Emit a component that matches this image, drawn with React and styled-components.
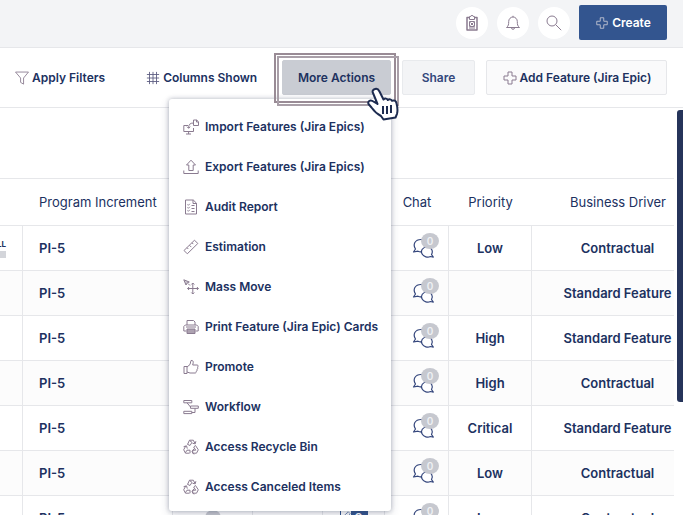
import React from "react";
import styled, { createGlobalStyle } from "styled-components";

const navy = "#20315f";
const mauve = "#8a7b90";
const line = "#e6e7ea";

const GlobalStyle = createGlobalStyle`
  * { box-sizing: border-box; }
  body { margin: 0; background: #fff; }
  body, button { font-family: Inter, "Liberation Sans", sans-serif; color: ${navy}; }
  button { margin: 0; cursor: pointer; }
  svg { flex: none; }
`;

const Page = styled.div`
  height: 100vh;
  overflow: hidden;
  display: flex;
  flex-direction: column;
  background: #fff;
`;

const TopBar = styled.header`
  flex: none;
  height: 48px;
  display: flex;
  align-items: center;
  justify-content: flex-end;
  gap: 9px;
  padding: 0 16px 2px 0;
  background: #f3f4f6;
  border-bottom: 1px solid ${line};
`;

const RoundButton = styled.button`
  width: 32px;
  height: 32px;
  display: grid;
  place-items: center;
  padding: 0;
  border: 0;
  border-radius: 50%;
  background: #fff;
`;

const CreateButton = styled.button`
  width: 88px;
  height: 35px;
  display: flex;
  align-items: center;
  justify-content: center;
  gap: 3px;
  padding: 0;
  border: 0;
  border-radius: 2px;
  background: #33558f;
  color: #fff;
  font-size: 12px;
  font-weight: 600;
  line-height: 16px;
`;

const Toolbar = styled.div`
  flex: none;
  height: 60px;
  display: flex;
  align-items: center;
  padding: 0 16px 0 15px;
  border-bottom: 1px solid ${line};
`;

const PlainButton = styled.button`
  display: flex;
  align-items: center;
  gap: 3px;
  padding: 0;
  border: 0;
  background: none;
  font-size: 12px;
  font-weight: 600;
  line-height: 16px;
  white-space: nowrap;
`;

const FilterGroup = styled.div`
  display: flex;
  gap: 41px;
`;

const ActionGroup = styled.div`
  display: flex;
  gap: 11px;
  margin-left: auto;
`;

const BoxButton = styled.button`
  width: ${(p) => p.$width}px;
  height: 35px;
  display: flex;
  align-items: center;
  justify-content: center;
  gap: 2px;
  padding: 0;
  border: 1px solid ${(p) => p.$edge};
  border-radius: 2px;
  background: ${(p) => p.$fill};
  color: ${(p) => p.$ink || navy};
  font-size: 12px;
  font-weight: 600;
  line-height: 16px;
  white-space: nowrap;
`;

const MenuAnchor = styled.div`
  position: relative;
`;

const FocusFrame = styled.span`
  position: absolute;
  z-index: 3;
  inset: -7px -5px -8px -8px;
  border: 2px solid #998b95;
  pointer-events: none;

  &::after {
    content: "";
    position: absolute;
    inset: 1px -5px -5px 1px;
    border: 2px solid #a99fa8;
  }
`;

const HandCursor = styled.svg`
  position: absolute;
  z-index: 4;
  right: -9px;
  bottom: -26px;
  pointer-events: none;
`;

const Menu = styled.ul`
  position: absolute;
  z-index: 2;
  top: 39px;
  right: 0;
  width: 222px;
  margin: 0;
  padding: 8px 0 4px;
  list-style: none;
  background: #fff;
  border-radius: 3px;
  box-shadow: 0 0 4px rgba(40, 50, 80, 0.3), 0 3px 10px rgba(40, 50, 80, 0.2);
`;

const MenuButton = styled.button`
  width: 100%;
  height: 40px;
  display: flex;
  align-items: center;
  gap: 6px;
  padding: 0 0 0 14px;
  border: 0;
  background: none;
  font-size: 12px;
  font-weight: 600;
  line-height: 16px;
  white-space: nowrap;
`;

const Content = styled.main`
  flex: 1;
  min-height: 0;
  display: flex;
  gap: 3px;
`;

const TableArea = styled.div`
  flex: 1;
  min-width: 0;
  overflow: hidden;
  padding-top: 70px;
`;

const Table = styled.table`
  width: calc(100% + 30px);
  table-layout: fixed;
  border-collapse: separate;
  border-spacing: 0;
  border-top: 1px solid ${line};
`;

const HeadCell = styled.th`
  height: 47px;
  padding: 0 0 0 ${(p) => (p.$left ? 16 : 0)}px;
  border-bottom: 1px solid ${line};
  font-size: 13px;
  font-weight: 400;
  line-height: 16px;
  text-align: ${(p) => (p.$left ? "left" : "center")};
  white-space: nowrap;
`;

const Row = styled.tr`
  background: ${(p) => (p.$shade ? "#fcfcfc" : "#fff")};
`;

const Cell = styled.td`
  height: 45px;
  padding: 0 0 0 ${(p) => (p.$left ? 16 : 0)}px;
  border-right: 1px solid ${line};
  border-bottom: 1px solid ${line};
  font-size: 13px;
  font-weight: 600;
  line-height: 16px;
  text-align: ${(p) => (p.$left ? "left" : "center")};
  white-space: nowrap;
`;

const Col = styled.col`
  width: ${(p) => (p.$width ? p.$width + "px" : "auto")};
`;

const Progress = styled.div`
  display: flex;
  flex-direction: column;
  align-items: flex-end;
  gap: 2px;
  padding-right: 16px;
  font-size: 8px;
  font-weight: 700;
  line-height: 10px;
`;

const ProgressBar = styled.span`
  width: 24px;
  height: 7px;
  background: #d3d5da;
`;

const ChatButton = styled.button`
  position: relative;
  display: block;
  width: 28px;
  height: 26px;
  margin: 0 0 0 25px;
  padding: 0;
  border: 0;
  background: none;
`;

const ChatCount = styled.span`
  position: absolute;
  top: -2px;
  right: -1px;
  width: 18px;
  height: 16px;
  border-radius: 50%;
  background: #c6c8cf;
  color: #eef0f3;
  font-size: 10px;
  font-weight: 600;
  line-height: 16px;
  text-align: center;
`;

const Avatar = styled.span`
  display: block;
  width: 16px;
  height: 16px;
  margin: 0 auto;
  border-radius: 50%;
  background: #c6c8cf;
`;

const Tally = styled.span`
  display: flex;
  width: 28px;
  height: 16px;
  margin: 0 auto;
  border: 1px solid #33558f;
`;

const TallyCount = styled.span`
  width: 18px;
  background: #33558f;
  color: #fff;
  font-size: 12px;
  line-height: 14px;
`;

const ScrollTrack = styled.div`
  flex: none;
  width: 6px;
  padding-top: 2px;
`;

const ScrollThumb = styled.div`
  height: 72%;
  border-radius: 3px 0 0 3px;
  background: #26345a;
`;

const glyphs = {
  clipboard: (
    <>
      <path d="M5 2.500H3v12.500h10V2.500h-2" strokeWidth="1.500" />
      <path d="M5.500 4.500v-3h1.300a1.200 1.200 0 0 1 2.400 0h1.300v3zM5.500 6.500h5v5h-5zM6.500 7.500l3 3M9.500 7.500l-3 3M5 13h6" />
    </>
  ),
  bell: (
    <path d="M1.500 12.500c2-1.500 2.200-3.200 2.200-6A4.300 4.500 0 0 1 8 2a4.300 4.500 0 0 1 4.300 4.500c0 2.800.2 4.500 2.200 6zM6.500 12.800a1.500 1.500 0 0 0 3 0M8 .8V2" />
  ),
  search: <path d="M11 6A5 5 0 1 1 1 6a5 5 0 0 1 10 0zM9.600 9.600l5.600 5.600" />,
  plus: <path d="M6 2h4v4h4v4h-4v4H6v-4H2V6h4z" />,
  filter: <path d="M.6 1.200h14.800L9.800 8v7l-3.400-2V8z" />,
  grid: <path d="M4 1v14M8 1v14M12 1v14M1 4h14M1 8h14M1 12h14" />,
  import: (
    <>
      <path d="M5 6.500H.8v6h9.700V9M3 15h5M5.600 12.500V15" />
      <path d="M10.500 1h3.200L15.500 2.800V6.500h-5zM13.500 1v2h2M10.500 4C7 4 5.600 5.500 5.600 9M4 7.700l1.600 1.600 1.700-1.600" />
    </>
  ),
  export: <path d="M.8 11.500v3h14.400v-3M5.800 11.500V6H3.500L8 1.200 12.500 6h-2.300v5.500z" />,
  audit: (
    <path d="M2.500 1h7.800l3.200 3.200V15h-11zM10 1v3.500h3.500M4.500 5.500l.8.800 1.500-1.500M4.500 8.500l.8.800 1.500-1.500M4.500 11.500l.8.800 1.500-1.500M8.500 6.500h3M8.500 9.500h3M8.500 12.500h3" />
  ),
  ruler: <path d="M1 11.500 11.500 1.200l3.300 3.300L4.300 14.800zM4 8.700l1.300 1.300M6.500 6.300l1.800 1.800M9 3.800l1.300 1.300" />,
  move: (
    <>
      <path d="M.8.800l5.500 2.200-2 .8L3 6z" fill="currentColor" fillOpacity=".4" />
      <path d="M5 4.500l2 2M9.800 4v11M4.600 9.500h10.800M8.300 5.500 9.800 4l1.500 1.500M8.300 13.500 9.800 15l1.500-1.500M6.100 8 4.600 9.500 6.100 11M13.900 8l1.500 1.500-1.500 1.500" />
    </>
  ),
  print: (
    <>
      <path d="M4 6V1.500h6.500L12 3v3M3.500 12H.8V7.500L2.300 6h11.400l1.500 1.500V12h-2.700M3 8h10" />
      <path d="M4 10h8v4.500H4z" fill="currentColor" fillOpacity=".7" />
    </>
  ),
  thumb: (
    <path d="M1 7.500h3v7H1zM4 8l3-2.500 1-4c1.800-.5 2.500 1 2.200 2.300L9.700 6h4.500c1.300 0 1.200 2 .2 2.200.8.600.5 1.800-.5 2 .6.800.2 1.800-.7 2 .3 1-.2 1.800-1.200 1.800H7l-3-1" />
  ),
  flow: (
    <path d="M.8 1.500h8v2.300h-8zM7.500 7h7.800v2.300H7.500zM.8 12.300h8v2.300h-8zM4 3.800 7.500 8M12 9.300v4.200H8.800" />
  ),
  recycle: (
    <path d="M4.500 5.500 6.500 1.200h3.800L12 4.500M9.500 4.300l2.700.5.700-2.600M6.500 1.500 9 3.300 7 6.500 4.500 5.300M12.500 6.500l2.800 4.300-1.800 3.400H9.700v-3h3L10.700 8zM11 9.800 9 12.700l2 2.700M6.500 14.200h-4L.7 10.800l2-3.800M.6 7.700l2.900-.9.800 2.800M2.300 13.800l1.700-2.600h3v3" />
  ),
};

const Icon = ({ name, size = 16, color = mauve }) => (
  <svg
    width={size}
    height={size}
    viewBox="0 0 16 16"
    fill="none"
    stroke="currentColor"
    color={color}
    strokeWidth="1"
    strokeLinejoin="round"
    aria-hidden="true"
  >
    {glyphs[name]}
  </svg>
);

const menuItems = [
  ["import", "Import Features (Jira Epics)"],
  ["export", "Export Features (Jira Epics)"],
  ["audit", "Audit Report"],
  ["ruler", "Estimation"],
  ["move", "Mass Move"],
  ["print", "Print Feature (Jira Epic) Cards"],
  ["thumb", "Promote"],
  ["flow", "Workflow"],
  ["recycle", "Access Recycle Bin"],
  ["recycle", "Access Canceled Items"],
];

const rows = [
  { priority: "Low", driver: "Contractual", progress: true },
  { priority: "", driver: "Standard Feature" },
  { priority: "High", driver: "Standard Feature" },
  { priority: "High", driver: "Contractual" },
  { priority: "Critical", driver: "Standard Feature" },
  { priority: "Low", driver: "Contractual" },
  { priority: "Low", driver: "Contractual", tally: 9 },
];

const Chat = () => (
  <ChatButton aria-label="Chat, 0 messages">
    <svg width="24" height="26" viewBox="0 0 24 26" fill="#fff" stroke="#34467c" strokeWidth="1.2" strokeLinejoin="round" aria-hidden="true">
      <path d="M3.500 14C.5 9.500 3 4.500 9 4.500s8.500 4.500 6.500 8.500-7 4.500-9.500 3.200L1.500 17z" />
      <path d="M19.500 19.500c2-3.500 0-7.500-4.500-7.500s-6.500 3.700-5 6.800 6 4 8.300 2.700l3 .7z" />
    </svg>
    <ChatCount>0</ChatCount>
  </ChatButton>
);

export default function App() {
  return (
    <Page>
      <GlobalStyle />
      <TopBar>
        <RoundButton aria-label="Tasks"><Icon name="clipboard" /></RoundButton>
        <RoundButton aria-label="Notifications"><Icon name="bell" /></RoundButton>
        <RoundButton aria-label="Search"><Icon name="search" /></RoundButton>
        <CreateButton><Icon name="plus" size={14} color="#c3c6d2" />Create</CreateButton>
      </TopBar>
      <Toolbar>
        <FilterGroup>
          <PlainButton><Icon name="filter" size={14} />Apply Filters</PlainButton>
          <PlainButton><Icon name="grid" size={14} color="#5c5c80" />Columns Shown</PlainButton>
        </FilterGroup>
        <ActionGroup>
          <MenuAnchor>
            <BoxButton $width={109} $fill="#c9ccd3" $edge="#c9ccd3" aria-haspopup="menu" aria-expanded="true">
              More Actions
            </BoxButton>
            <FocusFrame />
            <Menu>
              {menuItems.map(([icon, label]) => (
                <li key={label}>
                  <MenuButton><Icon name={icon} />{label}</MenuButton>
                </li>
              ))}
            </Menu>
            <HandCursor width="34" height="34" viewBox="0 0 34 34" fill="#fff" stroke="#1d2b50" strokeWidth="2" strokeLinejoin="round" aria-hidden="true">
              <path d="M9 2c2-.8 3.500.5 4.500 2.500l4 8c1.500-1.500 3.500-1 4.300.5 1.500-1.200 3.500-.7 4.200.8 2-1 4 0 4.500 2.500 1 4 1.500 7 .5 10.500l-1.500 3.700-12 2L15 29c-4-2-7-5-9.500-8.500L2.500 17c-1-2.500 1.500-4.500 4-3l5 3L7 6C6 4 7 2.500 9 2z" />
              <path d="M17 19v8M21 19v8M25 18v8" />
            </HandCursor>
          </MenuAnchor>
          <BoxButton $width={73} $fill="#f3f4f6" $edge="#e8eaed" $ink="#34487c">Share</BoxButton>
          <BoxButton $width={181} $fill="#fafafb" $edge={line}><Icon name="plus" />Add Feature (Jira Epic)</BoxButton>
        </ActionGroup>
      </Toolbar>
      <Content>
        <TableArea>
          <Table>
            <colgroup>
              <Col $width={23} />
              <Col $width={150} />
              <Col $width={80} />
              <Col $width={70} />
              <Col $width={62} />
              <Col $width={64} />
              <Col $width={83} />
              <Col />
            </colgroup>
            <thead>
              <tr>
                <HeadCell />
                <HeadCell $left>Program Increment</HeadCell>
                <HeadCell />
                <HeadCell />
                <HeadCell />
                <HeadCell>Chat</HeadCell>
                <HeadCell>Priority</HeadCell>
                <HeadCell>Business Driver</HeadCell>
              </tr>
            </thead>
            <tbody>
              {rows.map((row, i) => (
                <Row key={i} $shade={i % 2 === 1}>
                  <Cell>{row.progress && <Progress>LL<ProgressBar /></Progress>}</Cell>
                  <Cell $left>PI-5</Cell>
                  <Cell>{row.tally && <Avatar />}</Cell>
                  <Cell />
                  <Cell>{row.tally && <Tally><Icon name="ruler" size={10} color="#33558f" /><TallyCount>{row.tally}</TallyCount></Tally>}</Cell>
                  <Cell><Chat /></Cell>
                  <Cell>{row.priority}</Cell>
                  <Cell>{row.driver}</Cell>
                </Row>
              ))}
            </tbody>
          </Table>
        </TableArea>
        <ScrollTrack><ScrollThumb /></ScrollTrack>
      </Content>
    </Page>
  );
}
